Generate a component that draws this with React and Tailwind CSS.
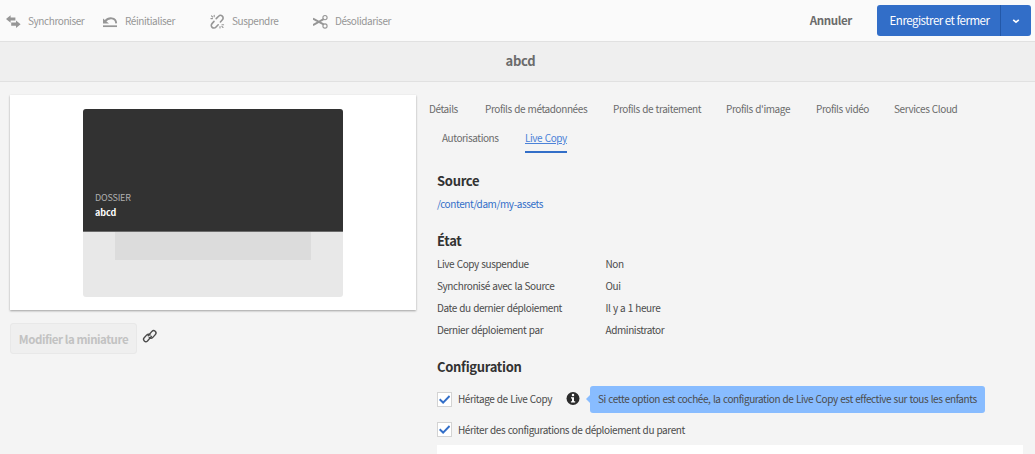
import React from "react";

const TOOLS = [
  { label: "Synchroniser", icon: SyncIcon, box: "w-[97px]" },
  { label: "Réinitialiser", icon: ResetIcon, box: "w-[107px]" },
  { label: "Suspendre", icon: UnlinkIcon, box: "w-[103px]" },
  { label: "Désolidariser", icon: ScissorsIcon, box: "w-[100px]" },
];

const TABS = [
  { label: "Détails", box: "w-[56px]" },
  { label: "Profils de métadonnées", box: "w-[128px]" },
  { label: "Profils de traitement", box: "w-[113px]" },
  { label: "Profils d'image", box: "w-[90px]" },
  { label: "Profils vidéo", box: "w-[78px]" },
  { label: "Services Cloud", box: "w-[70px]" },
];

const STATUS = [
  ["Live Copy suspendue", "Non"],
  ["Synchronisé avec la Source", "Oui"],
  ["Date du dernier déploiement", "Il y a 1 heure"],
  ["Dernier déploiement par", "Administrator"],
];

function SyncIcon() {
  return (
    <svg className="h-4 w-4" viewBox="0 0 16 16" fill="currentColor">
      <path d="M0 6 L4.6 2.2 V4.4 H9.4 V7.6 H4.6 V9.8 Z" />
      <path d="M14.6 11.2 L10 7.4 V9.6 H5.2 V12.8 H10 V15 Z" />
    </svg>
  );
}

function ResetIcon() {
  return (
    <svg className="h-4 w-4" viewBox="0 0 16 16" fill="none" stroke="currentColor">
      <path d="M2.2 8.2C5.5 4 12.9 4 13.2 10.4" strokeWidth="1.9" />
      <path d="M0 5.4 V10.6 H6 Z" fill="currentColor" stroke="none" />
      <path d="M0 13.2H14" strokeWidth="1.7" />
    </svg>
  );
}

function UnlinkIcon() {
  return (
    <svg className="h-4 w-4" viewBox="0 0 16 16" fill="none" stroke="currentColor" strokeWidth="1.6" strokeLinecap="round">
      <path d="M6.2 5.6 8.6 3.2a2.6 2.6 0 0 1 3.8 3.6L10.4 9M8.2 11.8 5.8 14.2a2.6 2.6 0 0 1-3.8-3.6L4 8.4" />
      <path d="M4.2 2.2v1.6M.9 5.6h1.6M1.5 2.9l1.1 1.1M10 13.6v1.4M12 11.8h1.6M11.9 13.4l1.1 1.1" strokeWidth="1.1" />
    </svg>
  );
}

function ScissorsIcon() {
  return (
    <svg className="h-4 w-4" viewBox="0 0 16 16" fill="none" stroke="currentColor">
      <circle cx="12" cy="4.6" r="2.1" strokeWidth="1.1" />
      <circle cx="12" cy="13" r="2.1" strokeWidth="1.1" />
      <path d="M0 5.6 10.6 11.4M0 12.2 10.6 6.2" strokeWidth="1.9" />
    </svg>
  );
}

function LinkIcon() {
  return (
    <svg className="h-4 w-4" viewBox="0 0 16 16" fill="none" stroke="currentColor" strokeWidth="1.4" strokeLinecap="round">
      <path d="M6.2 7.8 9.9 3.4a2.3 2.3 0 0 1 3.4 3.2L10.6 9.6a2.3 2.3 0 0 1-3.3 0" />
      <path d="M9.4 8.4 5.5 13a2.3 2.3 0 0 1-3.3-3.2L4.8 6.9a2.3 2.3 0 0 1 3.3 0" />
    </svg>
  );
}

function InfoIcon() {
  return (
    <svg className="h-[14px] w-[14px]" viewBox="0 0 14 14">
      <circle cx="7" cy="6.5" r="6.5" fill="#2c2c2c" />
      <circle cx="7" cy="3.1" r="1.25" fill="#fff" />
      <path d="M5 5.3H8V9.2H9.2V10.5H4.9V9.2H6V6.5H5Z" fill="#fff" />
    </svg>
  );
}

function Checkbox({ label }) {
  return (
    <label className="flex h-[15px] items-center">
      <span className="flex h-[15px] w-[15px] items-center justify-center border border-[#d3d3d3] bg-white">
        <svg className="h-[11px] w-[11px]" viewBox="0 0 11 11" fill="none" stroke="#326ec8" strokeWidth="2">
          <path d="M.6 5.3 4.1 8.6 10.6 2" />
        </svg>
      </span>
      <span className="pl-[6px]">{label}</span>
    </label>
  );
}

const HEADING = "text-[13px] leading-5 font-bold tracking-[-0.3px] text-[#323232]";

export default function App() {
  return (
    <div className="h-[454px] w-[1035px] overflow-hidden bg-[#f4f4f4] font-['Noto_Sans_CJK_SC','Noto_Sans',sans-serif] text-[10px] leading-4 tracking-[-0.41px] whitespace-nowrap text-[#4b4b4b] [word-spacing:0.6px]">
      <header className="flex h-[42px] items-center border-b border-[#e1e1e1] bg-[#fafafa] pl-[6px] text-[#969696]">
        {TOOLS.map(({ label, icon: Icon, box }) => (
          <button key={label} className={`flex h-4 shrink-0 items-center gap-[6px] ${box}`}>
            <Icon />
            <span>{label}</span>
          </button>
        ))}
        <button className="ml-auto mr-[25px] pb-0.5 text-[11.5px] font-bold tracking-[-0.35px] text-[#6b6b6b]">Annuler</button>
        <div className="mr-1 flex h-[31px] rounded-[3px] bg-[#326ec8] text-[11.5px] tracking-[-0.5px] text-white [word-spacing:1px]">
          <button className="w-[123px] pb-0.5 pl-0.5">Enregistrer et fermer</button>
          <button className="flex w-[31px] items-center justify-center border-l border-[#2358a8]">
            <svg className="h-2 w-2" viewBox="0 0 8 8" fill="none" stroke="currentColor" strokeWidth="1.6">
              <path d="M1.2 2.8 4 5.2 6.8 2.8" />
            </svg>
          </button>
        </div>
      </header>

      <div className="flex h-10 items-center justify-center border-b border-[#e1e1e1] bg-[#efefef] pb-0.5 pl-[6px] text-[13px] font-bold tracking-[-0.2px] text-[#6b6b6b]">
        abcd
      </div>

      <main className="flex">
        <section className="w-[419px] shrink-0 pt-[13px] pl-[10px]">
          <div className="flex h-[215px] w-[406px] justify-center bg-white pt-[14px] shadow-[0_1px_2px_rgba(0,0,0,0.35)]">
            <article className="h-[188px] w-[260px] overflow-hidden rounded-[3px] bg-[#e8e8e8]">
              <div className="flex h-[123px] flex-col justify-end border-b border-[#6b6b6b] bg-[#323232] pb-[11px] pl-[12px] text-[9px] leading-[15px]">
                <span className="tracking-[-0.2px] text-[#b0b0b0]">DOSSIER</span>
                <span className="font-bold tracking-normal text-white">abcd</span>
              </div>
              <div className="ml-8 h-[28px] w-[196px] bg-[#dcdcdc]" />
            </article>
          </div>
          <div className="mt-[13px] flex items-start gap-[5px]">
            <button className="h-[31px] w-[127px] rounded-[3px] border border-[#e8e8e8] bg-[#efefef] text-[11.5px] font-bold tracking-[-0.45px] text-[#c2c2c2]">
              Modifier la miniature
            </button>
            <span className="mt-[5px] text-[#4b4b4b]"><LinkIcon /></span>
          </div>
        </section>

        <section className="flex-1 pl-[10px]">
          <nav className="mt-[19px] text-[#6b6b6b]">
            <div className="flex">
              {TABS.map(({ label, box }) => (
                <a key={label} className={`shrink-0 ${box}`}>{label}</a>
              ))}
            </div>
            <div className="mt-[13px] flex pl-[13px]">
              <a className="w-[83px]">Autorisations</a>
              <a className="h-[23px] w-[42px] border-b-2 border-[#326ec8] text-[#4b82d8] underline underline-offset-1">Live Copy</a>
            </div>
          </nav>

          <div className="pl-2">
            <h2 className={`mt-[18px] ${HEADING}`}>Source</h2>
            <a className="mt-[5px] block text-[#326ec8]">/content/dam/my-assets</a>
            <h2 className={`mt-[19px] ${HEADING}`}>État</h2>
            <dl className="mt-[5px] grid grid-cols-[168.5px_1fr] gap-y-[6px]">
              {STATUS.map(([name, value]) => (
                <React.Fragment key={name}>
                  <dt>{name}</dt>
                  <dd>{value}</dd>
                </React.Fragment>
              ))}
            </dl>
            <h2 className={`mt-[19px] ${HEADING}`}>Configuration</h2>
            <div className="mt-[8px] flex h-[28px] items-center">
              <div className="w-[129px]"><Checkbox label="Héritage de Live Copy" /></div>
              <InfoIcon />
              <svg className="ml-[6px] h-2 w-1" viewBox="0 0 4 8"><path d="M4 0 0 4 4 8Z" fill="#88bcff" /></svg>
              <div className="flex h-[27px] w-[395px] items-center rounded-[3px] bg-[#88bcff] pl-2">
                Si cette option est cochée, la configuration de Live Copy est effective sur tous les enfants
              </div>
            </div>
            <div className="mt-[9px]"><Checkbox label="Hériter des configurations de déploiement du parent" /></div>
            <div className="mt-[8px] h-[10px] w-[586px] bg-white" />
          </div>
        </section>
      </main>
    </div>
  );
}
